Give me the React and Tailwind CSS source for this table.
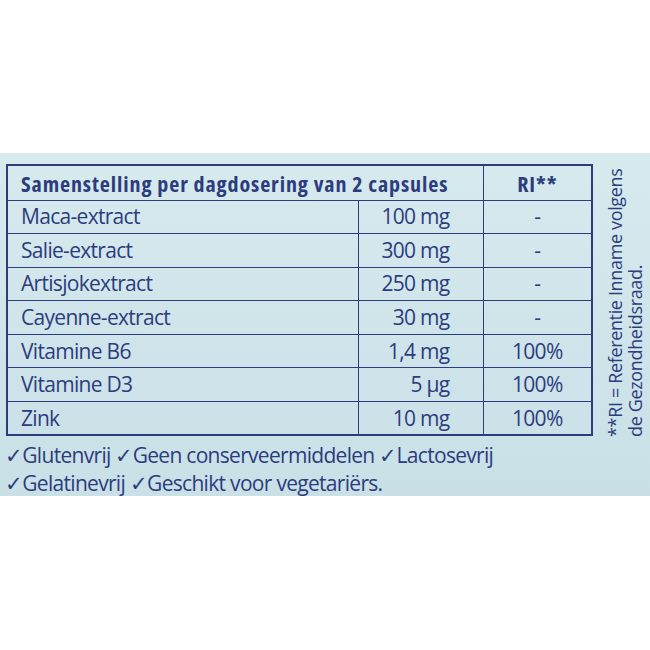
const rows = [
  { name: "Maca-extract", amount: "100 mg", ri: "-" },
  { name: "Salie-extract", amount: "300 mg", ri: "-" },
  { name: "Artisjokextract", amount: "250 mg", ri: "-" },
  { name: "Cayenne-extract", amount: "30 mg", ri: "-" },
  { name: "Vitamine B6", amount: "1,4 mg", ri: "100%" },
  { name: "Vitamine D3", amount: "5 µg", ri: "100%" },
  { name: "Zink", amount: "10 mg", ri: "100%" },
];

export default function App() {
  return (
    <div className="w-[650px] h-[650px] bg-white pt-[153px] text-[#2c3c7d] font-['Open_Sans',sans-serif] [font-stretch:92%] tracking-[-0.7px]">
      <div className="h-[343px] bg-gradient-to-b from-[#d7eaee] to-[#c9e0e7] flex">
        <div className="ml-[6px] mt-[11px] w-[585px]">
          <table className="w-[585px] border-collapse border-2 border-[#2c3c7d] table-fixed">
            <colgroup>
              <col className="w-[351px]" />
              <col className="w-[125px]" />
              <col className="w-[109px]" />
            </colgroup>
            <thead>
              <tr className="h-[35px] border-b-[1.5px] border-[#2c3c7d]">
                <th colSpan={2} className="text-left pl-[13px] text-[22px] font-bold leading-none [font-stretch:75%] tracking-[0.9px] whitespace-nowrap">
                  Samenstelling per dagdosering van 2 capsules
                </th>
                <th className="text-center text-[22px] font-bold leading-none [font-stretch:75%] tracking-[0.9px] border-l-[1.5px] border-[#2c3c7d]">RI**</th>
              </tr>
            </thead>
            <tbody>
              {rows.map((r) => (
                <tr key={r.name} className="h-[33.6px] border-b-[1.5px] border-[#2c3c7d] text-[21px] leading-none">
                  <td className="pl-[13px]">{r.name}</td>
                  <td className="text-right pr-[33px] border-l-[1.5px] border-[#2c3c7d]">{r.amount}</td>
                  <td className="text-center border-l-[1.5px] border-[#2c3c7d]">{r.ri}</td>
                </tr>
              ))}
            </tbody>
          </table>
          <div className="-ml-[1px] mt-[5px] text-[21px] leading-[28px]">
            <p>✓Glutenvrij ✓Geen conserveermiddelen ✓Lactosevrij</p>
            <p>✓Gelatinevrij ✓Geschikt voor vegetariërs.</p>
          </div>
        </div>
        <div className="ml-[14px] mt-[11px] h-[273px] [writing-mode:vertical-rl] rotate-180 whitespace-nowrap text-[18px] leading-[20px] tracking-[-0.35px]">
          **RI = Referentie Inname volgens
          <br />
          de Gezondheidsraad.
        </div>
      </div>
    </div>
  );
}
